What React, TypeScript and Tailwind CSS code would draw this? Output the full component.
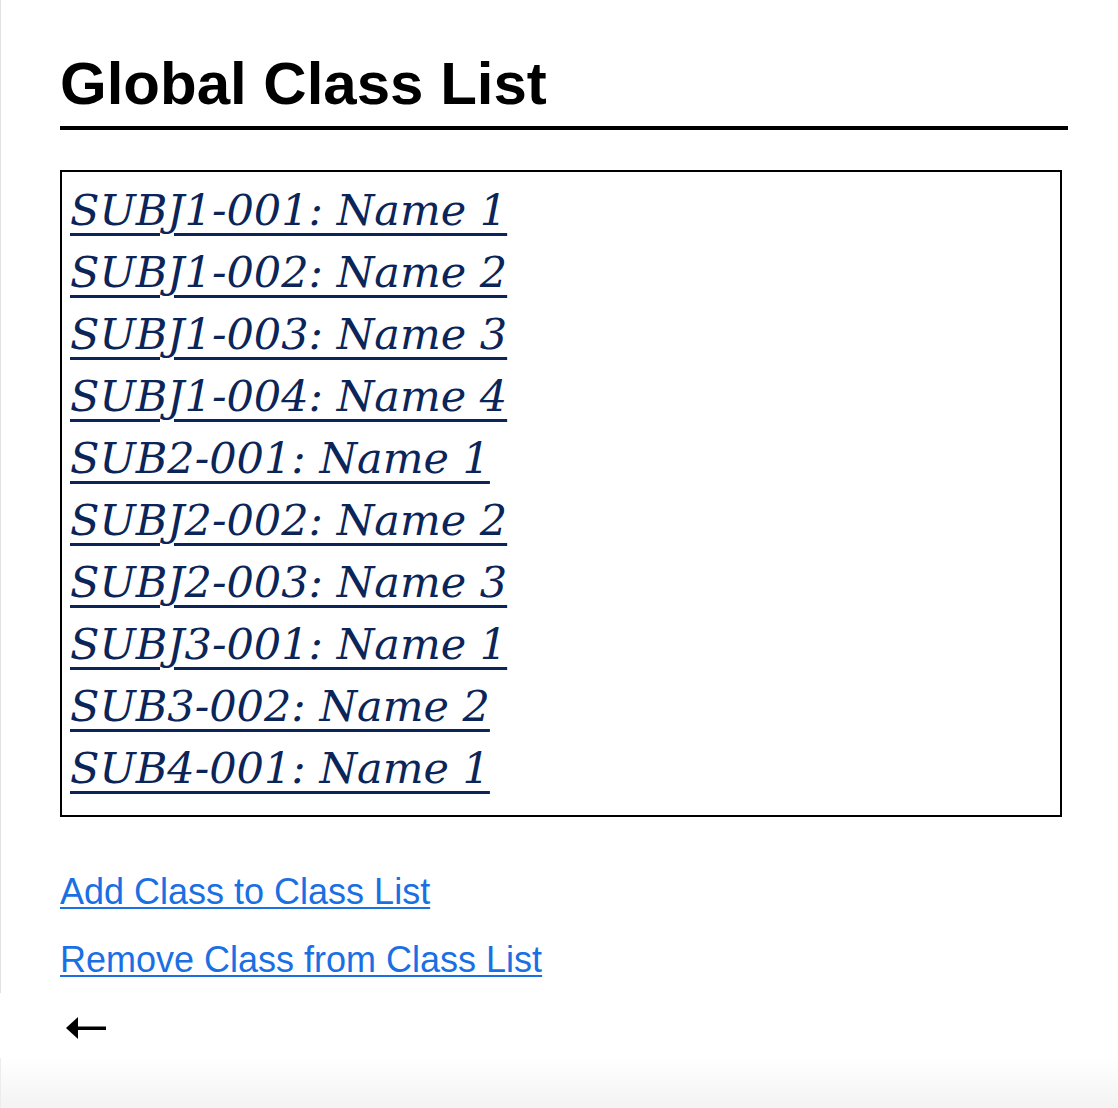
const classes = [
  "SUBJ1-001: Name 1",
  "SUBJ1-002: Name 2",
  "SUBJ1-003: Name 3",
  "SUBJ1-004: Name 4",
  "SUB2-001: Name 1",
  "SUBJ2-002: Name 2",
  "SUBJ2-003: Name 3",
  "SUBJ3-001: Name 1",
  "SUB3-002: Name 2",
  "SUB4-001: Name 1",
];

function BackArrow() {
  return (
    <svg width="44" height="24" viewBox="0 0 44 24" className="block">
      <polygon points="0,12 12,1 12,23" fill="#000" />
      <rect x="10" y="10.5" width="30" height="3.5" fill="#000" />
    </svg>
  );
}

export default function App() {
  return (
    <div className="min-h-[1108px] w-full bg-white font-['Liberation_Sans',Arial,sans-serif]">
      <div className="h-[993px] border-l border-[#e2e2e2] pl-[59px] pt-[54px]">
        <h1 className="w-[1008px] border-b-4 border-black pb-3 text-[60px] leading-[60px] font-bold text-black">
          Global Class List
        </h1>

        <div className="mt-10 w-[1002px] border-2 border-black pl-2 pt-[7px] pb-[16px]">
          {classes.map((c) => (
            <div key={c} className="h-[62px]">
              <a
                href="#"
                className="font-['DejaVu_Serif',serif] text-[43px] leading-[62px] italic text-[#0b2559] underline decoration-[3px] underline-offset-[8px]"
              >
                {c}
              </a>
            </div>
          ))}
        </div>

        <div className="mt-[55px] flex flex-col gap-7">
          <a href="#" className="block w-fit text-[36px] leading-[40px] text-[#1a6fe3] underline decoration-2 underline-offset-[3px]">
            Add Class to Class List
          </a>
          <a href="#" className="block w-fit text-[36px] leading-[40px] text-[#1a6fe3] underline decoration-2 underline-offset-[3px]">
            Remove Class from Class List
          </a>
        </div>
      </div>

      <div className="flex h-[65px] items-center pl-[66px] pt-1">
        <BackArrow />
      </div>

      <div className="h-[50px] border-l border-[#ececec] bg-gradient-to-b from-white to-[#f3f3f3]" />
    </div>
  );
}
